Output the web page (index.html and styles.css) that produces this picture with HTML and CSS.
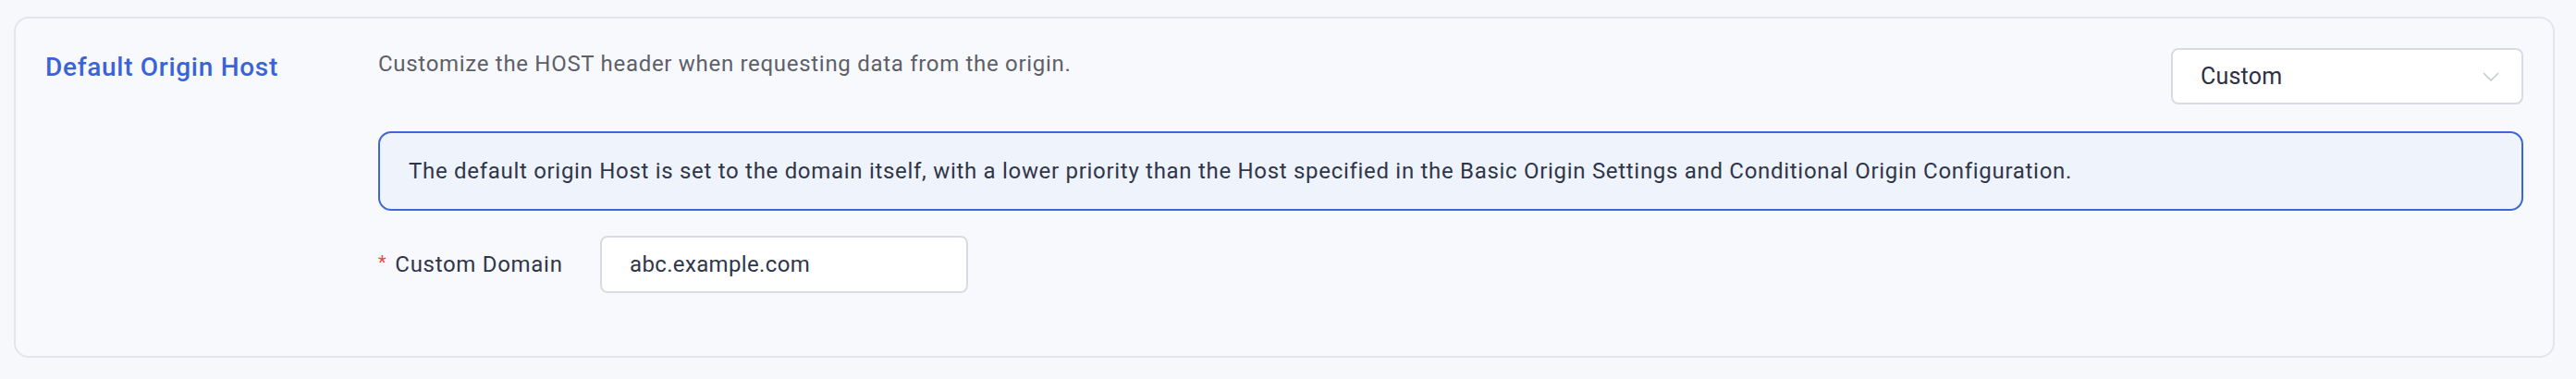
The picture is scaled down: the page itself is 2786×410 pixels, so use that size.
FILE: index.html
```html
<!DOCTYPE html>
<html lang="en">
<head>
<meta charset="UTF-8">
<meta name="viewport" content="width=device-width, initial-scale=1.0">
<title>Default Origin Host</title>
<link rel="stylesheet" href="styles.css">
</head>
<body>

<div class="card">
  <div class="card-title">Default Origin Host</div>
  <div class="card-body">
    <div class="head-row">
      <p class="desc">Customize the HOST header when requesting data from the origin.</p>
      <div class="select">
        <span>Custom</span>
        <svg class="chevron" width="18" height="10" viewBox="0 0 18 10"><path d="M1 1l8 8 8-8" fill="none" stroke="#c3c7cf" stroke-width="1.5"/></svg>
      </div>
    </div>
    <div class="notice">The default origin Host is set to the domain itself, with a lower priority than the Host specified in the Basic Origin Settings and Conditional Origin Configuration.</div>
    <div class="form-item">
      <label class="form-label"><span class="req">*</span>Custom Domain</label>
      <div class="input">abc.example.com</div>
    </div>
  </div>
</div>

</body>
</html>
```

FILE: styles.css
```css
body {
  font-family: Roboto, "Liberation Sans", sans-serif;
  margin: 0;
  padding: 0;
  background-color: #f7f8fc;
  letter-spacing: 0.7px;
}
.card {
  margin: 18px 23px 0 15px;
  padding: 32px;
  border: 2px solid #e3e5ed;
  border-radius: 16px;
  background-color: #f8f9fd;
  display: flex;
}
.card-title {
  width: 360px;
  flex-shrink: 0;
  font-size: 28px;
  font-weight: 500;
  line-height: 42px;
  color: #3b63d9;
}
.card-body {
  flex: 1;
}
.head-row {
  display: flex;
  justify-content: space-between;
  align-items: flex-start;
}
.desc {
  margin: 0;
  font-size: 24px;
  line-height: 34px;
  color: #5d6068;
}
.select {
  width: 381px;
  height: 61px;
  box-sizing: border-box;
  border: 2px solid #d8dbe3;
  border-radius: 8px;
  background-color: #ffffff;
  padding: 0 24px 0 30px;
  display: flex;
  align-items: center;
  justify-content: space-between;
  font-size: 25px;
  letter-spacing: 0.2px;
  color: #2c3142;
}
.notice {
  margin-top: 29px;
  border: 2px solid #3d66d9;
  border-radius: 14px;
  background-color: #eef3fc;
  padding: 24px 31px;
  font-size: 24px;
  line-height: 34px;
  color: #30364a;
}
.form-item {
  margin-top: 27px;
  margin-bottom: 36px;
  display: flex;
  align-items: center;
}
.form-label {
  width: 240px;
  font-size: 24px;
  color: #30364a;
}
.req {
  color: #f04848;
  font-size: 20px;
  margin-right: 9px;
  vertical-align: 3px;
}
.input {
  width: 398px;
  height: 62px;
  box-sizing: border-box;
  border: 2px solid #d8dbe3;
  border-radius: 8px;
  background-color: #ffffff;
  padding-left: 30px;
  display: flex;
  align-items: center;
  font-size: 24px;
  letter-spacing: 0.35px;
  color: #30364a;
}
```
